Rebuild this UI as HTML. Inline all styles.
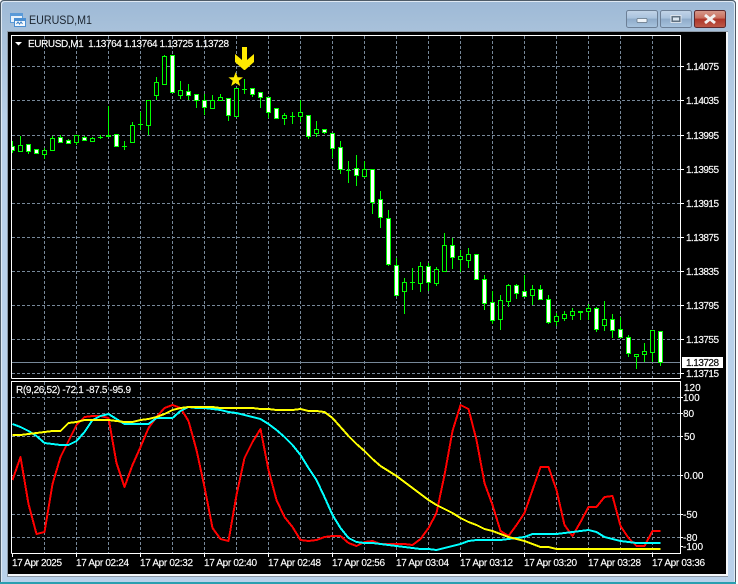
<!DOCTYPE html>
<html><head><meta charset="utf-8"><title>EURUSD,M1</title>
<style>
html,body{margin:0;padding:0;background:#fff;width:738px;height:584px;overflow:hidden}
svg{display:block}
text{font-family:"Liberation Sans",sans-serif;font-size:10px;fill:#fff;stroke:#fff;stroke-width:.15px}
</style></head><body>
<svg width="738" height="584" viewBox="0 0 738 584" xmlns="http://www.w3.org/2000/svg">
<defs>
<linearGradient id="tb" x1="0" y1="0" x2="0" y2="1"><stop offset="0" stop-color="#9db9d6"/><stop offset="0.25" stop-color="#a8c1da"/><stop offset="1" stop-color="#b9d1ea"/></linearGradient>
<linearGradient id="bb" x1="0" y1="0" x2="0" y2="1"><stop offset="0" stop-color="#c2d4e8"/><stop offset="0.45" stop-color="#a9c2dd"/><stop offset="0.5" stop-color="#8fabc9"/><stop offset="1" stop-color="#a8c4df"/></linearGradient>
<linearGradient id="rb" x1="0" y1="0" x2="0" y2="1"><stop offset="0" stop-color="#d79a8c"/><stop offset="0.45" stop-color="#c96f5e"/><stop offset="0.5" stop-color="#ae3528"/><stop offset="1" stop-color="#bd5a49"/></linearGradient>
<clipPath id="c1"><rect x="12" y="36" width="668" height="342"/></clipPath>
<clipPath id="c2"><rect x="12" y="382" width="668" height="171"/></clipPath>
</defs>
<rect x="0" y="0" width="736" height="583" rx="4" fill="#b9d1ea"/>
<rect x="0" y="0" width="736" height="122" rx="4" fill="url(#tb)"/>
<path d="M0.5 583V4Q0.5 .5 4 .5H732Q735.5 .5 735.5 4V583" fill="none" stroke="#4e5c68" stroke-width="1"/>
<path d="M1.5 583V5Q1.5 1.5 5 1.5H731Q734.5 1.5 734.5 5V583" fill="none" stroke="#dfe9f3" stroke-width="1"/>
<rect x="0" y="582" width="736" height="2" fill="#2a9fb0"/>
<!-- title icon -->
<g shape-rendering="crispEdges">
<rect x="10.5" y="13.5" width="12" height="9" fill="#e8f2fb" stroke="#5a9ad8"/>
<rect x="11" y="14" width="11" height="2" fill="#5a9ad8"/>
<rect x="14.5" y="18.5" width="11" height="8" fill="#f3f8fd" stroke="#4b8fd2"/>
<rect x="15" y="19" width="10" height="2" fill="#4b8fd2"/>
</g>
<path d="M16.5 24l1.5-2 1.5 2 1.5-2 1.5 2" fill="none" stroke="#3b7fc4" stroke-width="1"/>
<text x="29" y="24" textLength="63" lengthAdjust="spacingAndGlyphs" style="font-size:12px;fill:#1c2530;stroke:none">EURUSD,M1</text>
<!-- buttons -->
<rect x="626.5" y="10.5" width="31" height="17" rx="2" fill="url(#bb)" stroke="#6c7f96"/>
<rect x="637" y="18.5" width="10" height="4" rx="1" fill="#eef3f8" stroke="#5f7080" stroke-width=".7"/>
<rect x="660.5" y="10.5" width="31" height="17" rx="2" fill="url(#bb)" stroke="#6c7f96"/>
<rect x="671" y="15.5" width="10" height="7" fill="#5f7080" stroke="#eef3f8" stroke-width=".8"/>
<rect x="673" y="17.5" width="6" height="3" fill="#dbe6f0"/>
<rect x="694.5" y="10.5" width="31" height="17" rx="2" fill="url(#rb)" stroke="#5e2a2e"/>
<path d="M705 15l10 8M715 15l-10 8" stroke="#f3f1f0" stroke-width="3" fill="none"/>
<!-- client area -->
<rect x="7" y="31" width="721" height="546" fill="#8d99a6"/>
<rect x="8" y="32" width="718" height="542" fill="#000"/>
<rect x="8" y="574" width="720" height="2" fill="#f4f7fa"/>
<rect x="726" y="32" width="2" height="544" fill="#f4f7fa"/>
<!-- grid main -->
<g shape-rendering="crispEdges" stroke="#778899" stroke-width="1" stroke-dasharray="3 2" fill="none">
<path clip-path="url(#c1)" d="M12 66.5H680M12 100.5H680M12 135.5H680M12 169.5H680M12 203.5H680M12 237.5H680M12 271.5H680M12 305.5H680M12 339.5H680M12 373.5H680"/>
<path clip-path="url(#c1)" d="M44.5 36V378M76.5 36V378M108.5 36V378M140.5 36V378M172.5 36V378M204.5 36V378M236.5 36V378M268.5 36V378M300.5 36V378M332.5 36V378M364.5 36V378M396.5 36V378M428.5 36V378M460.5 36V378M492.5 36V378M524.5 36V378M556.5 36V378M588.5 36V378M620.5 36V378M652.5 36V378"/>
<path clip-path="url(#c2)" d="M12 397.5H680M12 413.5H680M12 436.5H680M12 475.5H680M12 514.5H680M12 537.5H680"/>
<path clip-path="url(#c2)" d="M44.5 382V553M76.5 382V553M108.5 382V553M140.5 382V553M172.5 382V553M204.5 382V553M236.5 382V553M268.5 382V553M300.5 382V553M332.5 382V553M364.5 382V553M396.5 382V553M428.5 382V553M460.5 382V553M492.5 382V553M524.5 382V553M556.5 382V553M588.5 382V553M620.5 382V553M652.5 382V553"/>
</g>
<!-- current price line -->
<path d="M12 362.5H680" stroke="#778899" shape-rendering="crispEdges"/>
<!-- candles -->
<g clip-path="url(#c1)" shape-rendering="crispEdges">
<path fill="none" stroke="#00ff00" d="M12.5 141V153M20.5 136V152M28.5 144V154M44.5 148V159M52.5 136V151M60.5 135V143M68.5 139V144M76.5 135V145M84.5 136V141M92.5 137V142M100.5 135V139M108.5 106V137M124.5 141V150M132.5 122V142M140.5 112V130M148.5 100V135M156.5 77V100M164.5 55V85M172.5 55V93M180.5 81V99M188.5 84V100M196.5 94V108M204.5 94V115M212.5 95V108M220.5 94V100M228.5 98V121M236.5 88V117M244.5 79V94M252.5 88V97M260.5 92V108M268.5 97V118M276.5 108V119M284.5 113V125M292.5 112V124M300.5 100V122M308.5 115V139M316.5 121V137M324.5 129V134M332.5 133V158M340.5 141V174M348.5 161V183M356.5 155V186M364.5 161V178M372.5 169V214M380.5 191V228M388.5 210V266M396.5 258V295M404.5 278V314M412.5 268V290M420.5 262V292M428.5 263V291M436.5 267V286M444.5 233V271M452.5 238V269M460.5 250V272M468.5 248V268M476.5 254V280M484.5 275V310M492.5 291V324M500.5 295V330M508.5 284V307M516.5 284V299M524.5 275V297M532.5 285V305M540.5 285V299M548.5 295V324M556.5 313V326M564.5 311V321M572.5 308V320M580.5 311V320M588.5 304V320M596.5 307V332M604.5 301V331M612.5 314V338M620.5 317V338M628.5 335V357M636.5 354V369M644.5 343V362M652.5 330V362M660.5 331V366"/>
<path fill="none" stroke="#00ff00" d="M98 137.5h5M106 136.5h5M106 135.5h5M122 146.5h5M138 124.5h5M242 89.5h5M290 116.5h5M346 170.5h5M410 282.5h5M578 311.5h5M578 312.5h5"/>
<path fill="#000" stroke="#00ff00" d="M18.5 145.5h4v6h-4zM42.5 150.5h4v4h-4zM50.5 138.5h4v12h-4zM74.5 135.5h4v7h-4zM90.5 138.5h4v3h-4zM130.5 125.5h4v17h-4zM146.5 100.5h4v25h-4zM154.5 82.5h4v13h-4zM162.5 56.5h4v28h-4zM178.5 90.5h4v5h-4zM210.5 100.5h4v8h-4zM218.5 97.5h4v3h-4zM234.5 88.5h4v28h-4zM282.5 115.5h4v3h-4zM298.5 112.5h4v4h-4zM314.5 129.5h4v4h-4zM362.5 169.5h4v7h-4zM402.5 282.5h4v9h-4zM418.5 266.5h4v17h-4zM434.5 269.5h4v14h-4zM442.5 245.5h4v26h-4zM458.5 256.5h4v3h-4zM466.5 254.5h4v6h-4zM498.5 300.5h4v19h-4zM506.5 285.5h4v16h-4zM530.5 289.5h4v6h-4zM554.5 316.5h4v5h-4zM562.5 314.5h4v4h-4zM570.5 311.5h4v4h-4zM586.5 308.5h4v3h-4zM602.5 319.5h4v6h-4zM634.5 354.5h4v2h-4zM642.5 351.5h4v3h-4zM650.5 330.5h4v22h-4z"/>
<path fill="#fff" stroke="#00ff00" d="M10.5 146.5h4v4h-4zM26.5 144.5h4v7h-4zM34.5 149.5h4v4h-4zM58.5 137.5h4v5h-4zM66.5 140.5h4v3h-4zM82.5 137.5h4v3h-4zM114.5 134.5h4v12h-4zM170.5 55.5h4v37h-4zM186.5 91.5h4v4h-4zM194.5 94.5h4v6h-4zM202.5 100.5h4v7h-4zM226.5 98.5h4v17h-4zM250.5 88.5h4v6h-4zM258.5 92.5h4v5h-4zM266.5 97.5h4v15h-4zM274.5 108.5h4v10h-4zM306.5 115.5h4v21h-4zM322.5 129.5h4v3h-4zM330.5 133.5h4v15h-4zM338.5 147.5h4v22h-4zM354.5 168.5h4v7h-4zM370.5 169.5h4v33h-4zM378.5 199.5h4v18h-4zM386.5 218.5h4v46h-4zM394.5 265.5h4v30h-4zM426.5 266.5h4v16h-4zM450.5 245.5h4v12h-4zM474.5 254.5h4v25h-4zM482.5 279.5h4v24h-4zM490.5 302.5h4v18h-4zM514.5 285.5h4v8h-4zM522.5 291.5h4v5h-4zM538.5 289.5h4v10h-4zM546.5 299.5h4v23h-4zM594.5 308.5h4v21h-4zM610.5 319.5h4v11h-4zM618.5 329.5h4v8h-4zM626.5 337.5h4v16h-4zM658.5 331.5h4v31h-4z"/>
</g>
<!-- arrow + star -->
<path d="M242 47H247V60L254 54V62L245 70H244L235 62V54L242 60Z" fill="#ffea00"/>
<path d="M235.7 72L237.6 77.2 243 77.4 238.7 80.7 240.2 86 235.7 83 231.2 86 232.7 80.7 228.4 77.4 233.8 77.2Z" fill="#ffea00"/>
<!-- rsi lines -->
<g clip-path="url(#c2)" fill="none" stroke-width="2" shape-rendering="crispEdges" stroke-linejoin="round">
<polyline stroke="#ff0000" points="12.5,480 20.5,457 28.5,504 36.5,534 44.5,532 52.5,484 60.5,457 68.5,441 76.5,425 84.5,417 92.5,416 100.5,416 108.5,418 116.5,463 124.5,487 132.5,465 140.5,447 148.5,428 156.5,417 164.5,408 172.5,405 180.5,408 188.5,421 196.5,450 204.5,487 212.5,528 220.5,539 228.5,541 236.5,495 244.5,458 252.5,442 260.5,429 268.5,470 276.5,500 284.5,517 292.5,527 300.5,540 308.5,541 316.5,540 324.5,537 332.5,536 340.5,536 348.5,543 356.5,546 364.5,542 372.5,541 380.5,544 388.5,544 396.5,544 404.5,544 412.5,545 420.5,539 428.5,528 436.5,513 444.5,475 452.5,431 460.5,405 468.5,409 476.5,440 484.5,483 492.5,505 500.5,531 508.5,536 516.5,525 524.5,513 532.5,490 540.5,467 548.5,467 556.5,490 564.5,525 572.5,536 580.5,522 588.5,507 596.5,507 604.5,497 612.5,496 620.5,526 628.5,538 636.5,546 644.5,546 652.5,531 660.5,531"/>
<polyline stroke="#00ffff" points="12.5,424 20.5,427 28.5,431 36.5,436 44.5,443 52.5,444 60.5,445 68.5,445 76.5,441 84.5,432 92.5,420 100.5,416 108.5,414 116.5,419 124.5,424 132.5,424 140.5,424 148.5,424 156.5,418 164.5,418 172.5,418 180.5,411 188.5,407 196.5,408 204.5,408 212.5,409 220.5,410 228.5,412 236.5,413 244.5,415 252.5,417 260.5,419 268.5,424 276.5,430 284.5,437 292.5,445 300.5,455 308.5,468 316.5,480 324.5,497 332.5,515 340.5,528 348.5,538 356.5,542 364.5,543 372.5,543 380.5,544 388.5,545 396.5,546 404.5,547 412.5,548 420.5,549 428.5,549 436.5,550 444.5,548 452.5,546 460.5,544 468.5,541 476.5,540 484.5,540 492.5,540 500.5,540 508.5,539 516.5,538 524.5,537 532.5,534 540.5,534 548.5,534 556.5,534 564.5,533 572.5,532 580.5,531 588.5,530 596.5,532 604.5,537 612.5,539 620.5,541 628.5,542 636.5,543 644.5,543 652.5,543 660.5,543"/>
<polyline stroke="#ffff00" points="12.5,435 20.5,435 28.5,434 36.5,433 44.5,432 52.5,431 60.5,431 68.5,423 76.5,422 84.5,420 92.5,420 100.5,420 108.5,420 116.5,421 124.5,422 132.5,422 140.5,420 148.5,419 156.5,417 164.5,414 172.5,410 180.5,408 188.5,407 196.5,407 204.5,407 212.5,407 220.5,408 228.5,408 236.5,408 244.5,408 252.5,408 260.5,409 268.5,409 276.5,410 284.5,410 292.5,410 300.5,409 308.5,411 316.5,411 324.5,412 332.5,418 340.5,427 348.5,436 356.5,444 364.5,451 372.5,459 380.5,466 388.5,471 396.5,476 404.5,482 412.5,488 420.5,494 428.5,500 436.5,505 444.5,509 452.5,513 460.5,518 468.5,522 476.5,525 484.5,529 492.5,531 500.5,534 508.5,537 516.5,539 524.5,541 532.5,544 540.5,547 548.5,547 556.5,549 564.5,549 572.5,549 580.5,549 588.5,549 596.5,549 604.5,549 612.5,549 620.5,549 628.5,549 636.5,549 644.5,549 652.5,549 660.5,549"/>
</g>
<!-- pane frames -->
<g fill="none" stroke="#fff" stroke-width="1" shape-rendering="crispEdges">
<path d="M11.5 378.5V35.5H680.5V378.5"/>
<path d="M11.5 378.5H680.5"/>
<path d="M11.5 553.5V381.5H680.5V553.5H11.5"/>
<path d="M680 66.5h4M680 100.5h4M680 135.5h4M680 169.5h4M680 203.5h4M680 237.5h4M680 271.5h4M680 305.5h4M680 339.5h4M680 373.5h4"/>
<path d="M680 397.5h3M680 413.5h3M680 436.5h3M680 475.5h3M680 514.5h3M680 537.5h3M680 546.5h3"/>
<path d="M12.5 553v4M76.5 553v4M140.5 553v4M204.5 553v4M268.5 553v4M332.5 553v4M396.5 553v4M460.5 553v4M524.5 553v4M588.5 553v4M652.5 553v4"/>
</g>
<!-- header labels -->
<path d="M15 42h7l-3.5 3.5z" fill="#fff"/>
<text x="28" y="47" textLength="201" lengthAdjust="spacing" xml:space="preserve">EURUSD,M1  1.13764 1.13764 1.13725 1.13728</text>
<text x="16" y="393" textLength="115" lengthAdjust="spacing">R(9,26,52) -72.1 -87.5 -95.9</text>
<!-- price labels -->
<text x="686" y="70" textLength="33" lengthAdjust="spacing">1.14075</text>
<text x="686" y="104" textLength="33" lengthAdjust="spacing">1.14035</text>
<text x="686" y="139" textLength="33" lengthAdjust="spacing">1.13995</text>
<text x="686" y="173" textLength="33" lengthAdjust="spacing">1.13955</text>
<text x="686" y="207" textLength="33" lengthAdjust="spacing">1.13915</text>
<text x="686" y="241" textLength="33" lengthAdjust="spacing">1.13875</text>
<text x="686" y="275" textLength="33" lengthAdjust="spacing">1.13835</text>
<text x="686" y="309" textLength="33" lengthAdjust="spacing">1.13795</text>
<text x="686" y="343" textLength="33" lengthAdjust="spacing">1.13755</text>
<text x="686" y="377" textLength="33" lengthAdjust="spacing">1.13715</text>
<rect x="682" y="357" width="41" height="11" fill="#fff"/>
<text x="686" y="366" textLength="33" lengthAdjust="spacing" style="fill:#000;stroke:#000">1.13728</text>
<!-- rsi labels -->
<text x="684" y="391">120</text>
<text x="683" y="401">100</text>
<text x="683" y="417">80</text>
<text x="684" y="440">50</text>
<text x="684" y="479">0.00</text>
<text x="683" y="518">-50</text>
<text x="683" y="541">-80</text>
<text x="683" y="550">-100</text>
<!-- time labels -->
<text x="12" y="566" textLength="50" lengthAdjust="spacing">17 Apr 2025</text>
<text x="76" y="566" textLength="53" lengthAdjust="spacing">17 Apr 02:24</text>
<text x="140" y="566" textLength="53" lengthAdjust="spacing">17 Apr 02:32</text>
<text x="204" y="566" textLength="53" lengthAdjust="spacing">17 Apr 02:40</text>
<text x="268" y="566" textLength="53" lengthAdjust="spacing">17 Apr 02:48</text>
<text x="332" y="566" textLength="53" lengthAdjust="spacing">17 Apr 02:56</text>
<text x="396" y="566" textLength="53" lengthAdjust="spacing">17 Apr 03:04</text>
<text x="460" y="566" textLength="53" lengthAdjust="spacing">17 Apr 03:12</text>
<text x="524" y="566" textLength="53" lengthAdjust="spacing">17 Apr 03:20</text>
<text x="588" y="566" textLength="53" lengthAdjust="spacing">17 Apr 03:28</text>
<text x="652" y="566" textLength="53" lengthAdjust="spacing">17 Apr 03:36</text>
</svg>
</body></html>
